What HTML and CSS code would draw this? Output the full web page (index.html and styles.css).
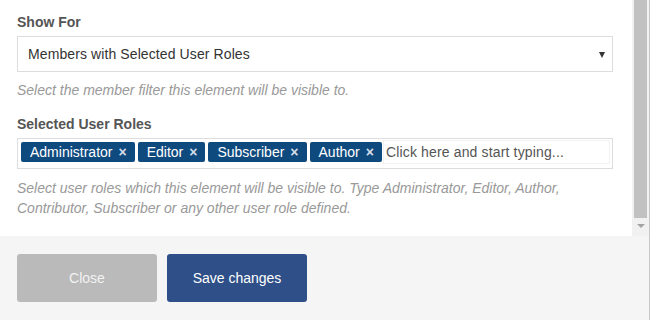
FILE: index.html
```html
<!DOCTYPE html>
<html>
<head>
<meta charset="utf-8">
<link rel="stylesheet" href="styles.css">
</head>
<body>
<div class="modal">
  <div class="body-wrap">
    <div class="body">
      <div class="group">
        <div class="label">Show For</div>
        <div class="select">
          <span>Members with Selected User Roles</span>
          <span class="caret"></span>
        </div>
        <div class="help">Select the member filter this element will be visible to.</div>
      </div>
      <div class="group">
        <div class="label">Selected User Roles</div>
        <div class="tags">
          <span class="tag">Administrator<span class="x">×</span></span>
          <span class="tag">Editor<span class="x">×</span></span>
          <span class="tag">Subscriber<span class="x">×</span></span>
          <span class="tag">Author<span class="x">×</span></span>
          <span class="input">Click here and start typing...</span>
        </div>
        <div class="help">Select user roles which this element will be visible to. Type Administrator, Editor, Author, Contributor, Subscriber or any other user role defined.</div>
      </div>
    </div>
    <div class="scrollbar">
      <div class="thumb"></div>
      <div class="arrow"></div>
    </div>
  </div>
  <div class="footer">
    <button class="btn btn-close">Close</button>
    <button class="btn btn-save">Save changes</button>
  </div>
</div>
</body>
</html>
```

FILE: styles.css
```css
* { box-sizing: border-box; }
html, body { margin: 0; padding: 0; }
body {
  font-family: "Liberation Sans", Arial, sans-serif;
  font-size: 14px;
  color: #333;
  background: #fff;
}
.modal {
  width: 650px;
  height: 320px;
  border-right: 1px solid #c8c8c8;
  display: flex;
  flex-direction: column;
}
.body-wrap {
  height: 236px;
  display: flex;
}
.body {
  flex: 1;
  padding: 12px 19px 0 17px;
  overflow: hidden;
}
.group { margin-bottom: 14px; }
.label {
  font-weight: bold;
  color: #555;
  line-height: 20px;
  margin-bottom: 4px;
}
.select {
  height: 36px;
  border: 1px solid #ddd;
  padding: 0 7px 0 10px;
  display: flex;
  align-items: center;
  justify-content: space-between;
  color: #333;
  letter-spacing: 0.1px;
}
.caret {
  width: 0;
  height: 0;
  border-left: 3px solid transparent;
  border-right: 3px solid transparent;
  border-top: 6px solid #333;
  margin-top: 1px;
}
.help {
  font-size: 14px;
  font-style: italic;
  color: #999;
  line-height: 20px;
  margin-top: 8px;
  padding-right: 30px;
}
.tags + .help { margin-top: 9px; }
.tags {
  border: 1px solid #ddd;
  padding: 3px 4px 6px 3px;
  display: flex;
  align-items: flex-start;
  gap: 3px;
}
.tag {
  background: #0f4a7e;
  color: #fff;
  height: 20px;
  line-height: 20px;
  padding: 0 8px 0 9px;
  border-radius: 2px;
  white-space: nowrap;
}
.tag .x {
  font-size: 14px;
  font-weight: bold;
  color: #d5dde8;
  margin-left: 6px;
}
.input {
  flex: 1;
  color: #555;
  line-height: 20px;
  padding-left: 1px;
  white-space: nowrap;
  outline: 1px solid #f2f2f2;
  outline-offset: 1px;
  letter-spacing: 0.15px;
}
.scrollbar {
  width: 17px;
  background: #f1f1f1;
  display: flex;
  flex-direction: column;
  align-items: center;
}
.thumb {
  width: 13px;
  height: 218px;
  background: #c1c1c1;
}
.arrow {
  margin-top: 6px;
  width: 0;
  height: 0;
  border-left: 4px solid transparent;
  border-right: 4px solid transparent;
  border-top: 4px solid #a3a3a3;
}
.footer {
  flex: 1;
  background: #f5f5f5;
  padding: 18px 17px 0;
  display: flex;
  gap: 10px;
  align-items: flex-start;
}
.btn {
  width: 140px;
  height: 48px;
  border: none;
  border-radius: 3px;
  font-family: "Liberation Sans", Arial, sans-serif;
  font-size: 14px;
  padding: 0;
}
.btn-close {
  background: #bababa;
  color: #f2f2f2;
}
.btn-save {
  background: #2e4f87;
  color: #fff;
}
```
